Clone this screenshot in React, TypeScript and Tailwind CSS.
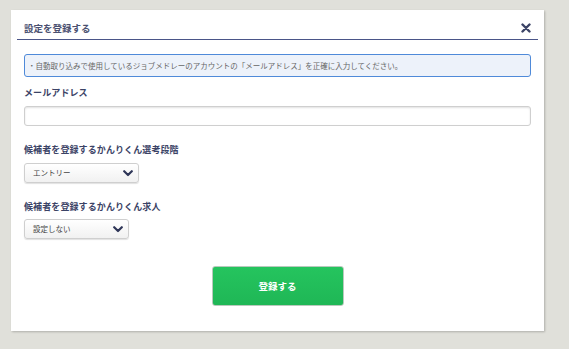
import { useState } from 'react'

const font = "font-['Noto_Sans_CJK_JP','Noto_Sans',sans-serif]"

const cx = {
  label: 'text-[9px] font-bold text-[#3b4366] leading-[12px] tracking-[0.1px]',
  select: 'relative h-[20px] flex items-center pl-[8px] rounded-[3px] border border-[#cfcfcf] bg-[linear-gradient(#ffffff,#f1f1f1)] shadow-[0_1px_1px_rgba(0,0,0,0.12)] text-[7.5px] text-[#444]',
}

function Chevron() {
  return (
    <svg width="10" height="7" viewBox="0 0 10 7" className="absolute right-[5px] top-[6px]">
      <path d="M1.2 1.2 L5 5 L8.8 1.2" fill="none" stroke="#2f3658" strokeWidth="2.2" strokeLinecap="round" strokeLinejoin="round" />
    </svg>
  )
}

function Select({ value, width }: { value: string; width: string }) {
  return (
    <div className={`${cx.select} ${width}`}>
      <span>{value}</span>
      <Chevron />
    </div>
  )
}

export default function App() {
  const [email, setEmail] = useState('')

  return (
    <div className={`w-[569px] h-[349px] bg-[#e0e0da] pt-[10px] pl-[11px] ${font}`}>
      <div className="w-[533px] h-[321px] bg-white shadow-[1px_1px_2px_rgba(0,0,0,0.22)] flex flex-col">

        <div className="mx-[6px] h-[30px] border-b border-[#4a5588] flex items-start justify-between pl-[7px] pr-[7px] pt-[8px]">
          <span className="text-[9.5px] font-bold text-[#4a5070] leading-[20px]">設定を登録する</span>
          <svg width="10" height="10" viewBox="0 0 10 10" className="mt-[5px]">
            <path d="M1.5 1.5 L8.5 8.5 M8.5 1.5 L1.5 8.5" stroke="#3b4366" strokeWidth="2.4" strokeLinecap="round" />
          </svg>
        </div>

        <div className="px-[13px] flex flex-col">
          <div className="mt-[14px] h-[23px] rounded-[3px] border border-[#4f8ad9] bg-[#edf2fa] flex items-center pl-[3px] text-[7.5px] text-[#666]">
            ・自動取り込みで使用しているジョブメドレーのアカウントの「メールアドレス」を正確に入力してください。
          </div>

          <label className={`${cx.label} mt-[10px]`}>メールアドレス</label>
          <input
            className="mt-[7px] h-[20px] w-full rounded-[3px] border border-[#cfcfcf] shadow-[inset_0_1px_2px_rgba(0,0,0,0.12)] outline-none px-2 text-[8px]"
            value={email}
            onChange={(e) => setEmail(e.target.value)}
          />

          <label className={`${cx.label} mt-[18px]`}>候補者を登録するかんりくん選考段階</label>
          <div className="mt-[7px]">
            <Select value="エントリー" width="w-[115px]" />
          </div>

          <label className={`${cx.label} mt-[18px]`}>候補者を登録するかんりくん求人</label>
          <div className="mt-[6px]">
            <Select value="設定しない" width="w-[105px]" />
          </div>

          <div className="flex justify-center mt-[27px]">
            <button className="w-[132px] h-[40px] rounded-[3px] border border-[#b9c9bd] bg-[linear-gradient(#25c45e,#1fb756)] text-white text-[9.5px] font-bold">
              登録する
            </button>
          </div>
        </div>

      </div>
    </div>
  )
}
